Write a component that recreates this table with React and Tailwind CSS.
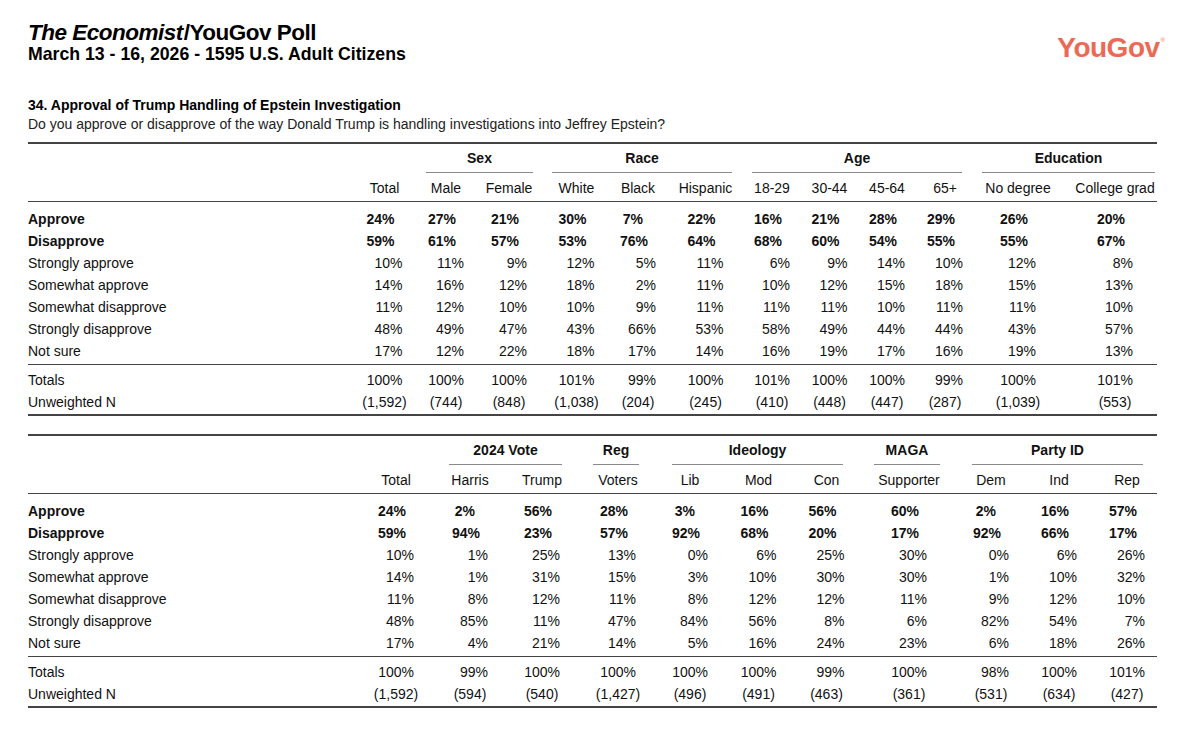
import React from 'react';

// ── Tableau 1 : Sex / Race / Age / Education ──
const TOP = {
  cols: 'grid-cols-[326px_61px_62px_64px_71px_52px_83px_50px_65px_50px_66px_80px_99px]',
  lead: 'col-span-2',
  groups: [
    { label: 'Sex', span: 'col-span-2', inset: 'ml-[11px] mr-[8px]' },
    { label: 'Race', span: 'col-span-3', inset: 'ml-[11px] mr-[15px]' },
    { label: 'Age', span: 'col-span-4', inset: 'ml-[5px] mr-[16px]' },
    { label: 'Education', span: 'col-span-2', inset: 'ml-[4px] mr-[2px]' },
  ],
  heads: ['Total', 'Male', 'Female', 'White', 'Black', 'Hispanic', '18-29', '30-44', '45-64', '65+', 'No degree', 'College grad'],
  shifts: ['', '', '', '', '', '', '', '', '', '', '', 'pl-[15px]'],
  rows: [
    ['Approve', true, [24, 27, 21, 30, 7, 22, 16, 21, 28, 29, 26, 20]],
    ['Disapprove', true, [59, 61, 57, 53, 76, 64, 68, 60, 54, 55, 55, 67]],
    ['Strongly approve', false, [10, 11, 9, 12, 5, 11, 6, 9, 14, 10, 12, 8]],
    ['Somewhat approve', false, [14, 16, 12, 18, 2, 11, 10, 12, 15, 18, 15, 13]],
    ['Somewhat disapprove', false, [11, 12, 10, 10, 9, 11, 11, 11, 10, 11, 11, 10]],
    ['Strongly disapprove', false, [48, 49, 47, 43, 66, 53, 58, 49, 44, 44, 43, 57]],
    ['Not sure', false, [17, 12, 22, 18, 17, 14, 16, 19, 17, 16, 19, 13]],
  ],
  totals: [100, 100, 100, 101, 99, 100, 101, 100, 100, 99, 100, 101],
  n: ['1,592', '744', '848', '1,038', '204', '245', '410', '448', '447', '287', '1,039', '553'],
};

// ── Tableau 2 : Vote / Reg / Ideology / MAGA / Party ID ──
const BOTTOM = {
  cols: 'grid-cols-[331px_74px_74px_70px_82px_62px_75px_61px_104px_60px_76px_60px]',
  lead: 'col-span-2',
  groups: [
    { label: '2024 Vote', span: 'col-span-2', inset: 'ml-[16px] mr-[15px]' },
    { label: 'Reg', span: 'col-span-1', inset: 'ml-[16px] mr-[20px]' },
    { label: 'Ideology', span: 'col-span-3', inset: 'ml-[13px] mr-[14px]' },
    { label: 'MAGA', span: 'col-span-1', inset: 'ml-[17px] mr-[21px]' },
    { label: 'Party ID', span: 'col-span-3', inset: 'ml-[11px] mr-[14px]' },
  ],
  heads: ['Total', 'Harris', 'Trump', 'Voters', 'Lib', 'Mod', 'Con', 'Supporter', 'Dem', 'Ind', 'Rep'],
  shifts: ['', '', '', '', '', '', '', '', '', '', ''],
  rows: [
    ['Approve', true, [24, 2, 56, 28, 3, 16, 56, 60, 2, 16, 57]],
    ['Disapprove', true, [59, 94, 23, 57, 92, 68, 20, 17, 92, 66, 17]],
    ['Strongly approve', false, [10, 1, 25, 13, 0, 6, 25, 30, 0, 6, 26]],
    ['Somewhat approve', false, [14, 1, 31, 15, 3, 10, 30, 30, 1, 10, 32]],
    ['Somewhat disapprove', false, [11, 8, 12, 11, 8, 12, 12, 11, 9, 12, 10]],
    ['Strongly disapprove', false, [48, 85, 11, 47, 84, 56, 8, 6, 82, 54, 7]],
    ['Not sure', false, [17, 4, 21, 14, 5, 16, 24, 23, 6, 18, 26]],
  ],
  totals: [100, 99, 100, 100, 100, 100, 99, 100, 98, 100, 101],
  n: ['1,592', '594', '540', '1,427', '496', '491', '463', '361', '531', '634', '427'],
};

function Row({ t, label, bold, children }) {
  return (
    <div className={`grid ${t.cols} h-[22px] leading-[22px]`}>
      <div className={bold ? 'font-bold' : ''}>{label}</div>
      {children}
    </div>
  );
}

function PollTable({ t }) {
  return (
    <div className="w-[1129px] border-t-2 border-b-2 border-[#444]">
      {/* Groupes */}
      <div className={`grid ${t.cols}`}>
        <div className={t.lead} />
        {t.groups.map((g) => (
          <div key={g.label} className={`${g.span} ${g.inset} pt-[5px] pb-[4px] leading-[19px] text-center font-bold border-b border-[#8a8a8a]`}>
            {g.label}
          </div>
        ))}
      </div>

      {/* En-têtes de colonnes */}
      <div className={`grid ${t.cols} pt-[6px] pb-[3px] leading-[19px] border-b border-[#444]`}>
        <div />
        {t.heads.map((h, i) => (
          <div key={h} className={`text-center ${t.shifts[i]}`}>{h}</div>
        ))}
      </div>

      {/* Données */}
      <div className="pt-[6px] pb-[2px] border-b border-[#444]">
        {t.rows.map(([label, bold, vals]) => (
          <Row key={label} t={t} label={label} bold={bold}>
            {vals.map((v, i) => (
              <div key={i} className={`text-center ${t.shifts[i]}`}>
                {bold ? (
                  <span className="inline-block w-[36px] text-right pr-[13px] font-bold">{v}%</span>
                ) : (
                  <span className="inline-block w-[36px] text-right">{v}%</span>
                )}
              </div>
            ))}
          </Row>
        ))}
      </div>

      {/* Totaux */}
      <div className="pt-[4px] pb-[1px]">
        <Row t={t} label="Totals">
          {t.totals.map((v, i) => (
            <div key={i} className={`text-center ${t.shifts[i]}`}>
              <span className="inline-block w-[36px] text-right">{v}%</span>
            </div>
          ))}
        </Row>
        <Row t={t} label="Unweighted N">
          {t.n.map((v, i) => (
            <div key={i} className={`text-center ${t.shifts[i]}`}>({v})</div>
          ))}
        </Row>
      </div>
    </div>
  );
}

export default function App() {
  return (
    <div className="w-[1179px] h-[741px] bg-white pl-[28px] pr-[14px] text-[14px] text-[#111] font-['Liberation_Sans',Arial,sans-serif]">
      {/* Titre + logo */}
      <div className="flex justify-between">
        <div className="pt-[21px]">
          <h1 className="text-[22.5px] leading-[24px] font-bold tracking-[-0.5px] text-black">
            <i className="pr-[1px]">The Economist</i>/YouGov Poll
          </h1>
          <p className="text-[17.7px] leading-[18px] font-bold text-black">
            March 13 - 16, 2026 - 1595 U.S. Adult Citizens
          </p>
        </div>
        <div className="pt-[34px] flex items-start text-[#ec6a55]">
          <span className="text-[28px] leading-[28px] font-bold tracking-[-0.5px]">YouGov</span>
          <span className="text-[6px] leading-[6px] mt-[3px] ml-[1px]">®</span>
        </div>
      </div>

      {/* Question */}
      <div className="mt-[33px] leading-[19px]">
        <p className="font-bold text-black">34. Approval of Trump Handling of Epstein Investigation</p>
        <p className="text-[#222]">Do you approve or disapprove of the way Donald Trump is handling investigations into Jeffrey Epstein?</p>
      </div>

      <div className="mt-[8px]">
        <PollTable t={TOP} />
      </div>
      <div className="mt-[18px]">
        <PollTable t={BOTTOM} />
      </div>
    </div>
  );
}
